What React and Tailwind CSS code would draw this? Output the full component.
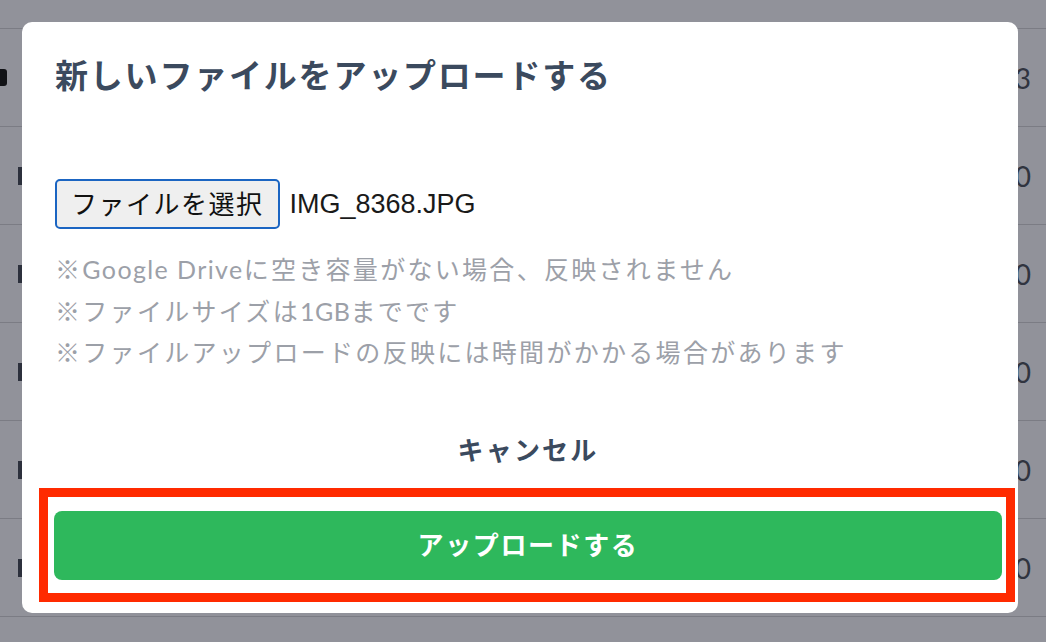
import React from 'react'

const rows = ['3', '0', '0', '0', '0', '0']

const jp = { fontFamily: '"Lato", "Noto Sans CJK JP", sans-serif' }

function BackgroundTable() {
  return (
    <div className="pt-[28px]">
      <div className="border-t border-[#7b7c84]">
        {rows.map((v, i) => (
          <div
            key={i}
            className="h-[98px] border-b border-[#7b7c84] flex items-center justify-between pr-[15px]"
          >
            {i === 0 ? (
              <div className="w-[18px] h-[17px] -ml-[11px] rounded-[3px] bg-[#111216]" />
            ) : (
              <div className="w-[4px] h-[18px] ml-[18px] bg-[#2c303c]" />
            )}
            <span className="text-[28px] text-[#30343f]" style={{ fontFamily: '"Lato", sans-serif' }}>
              {v}
            </span>
          </div>
        ))}
      </div>
    </div>
  )
}

export default function App() {
  return (
    <div className="relative w-[1046px] h-[642px] overflow-hidden bg-[#91929a]">
      <BackgroundTable />

      {/* modal */}
      <div
        className="absolute left-[22px] top-[22px] w-[996px] h-[591px] bg-white rounded-[10px] flex flex-col pt-[31px] pb-[33px]"
        style={jp}
      >
        <h2 className="px-[33px] h-[44px] leading-[44px] text-[33px] font-semibold tracking-[1.8px] text-[#3b4a5e]">
          新しいファイルをアップロードする
        </h2>

        <div className="px-[33px] mt-[82px] flex items-center gap-[10px]">
          <button className="h-[50px] px-[14px] rounded-[5px] border-[2.5px] border-[#1b65c2] bg-[#efefef] text-[26px] tracking-[1.5px] text-[#111] leading-none">
            ファイルを選択
          </button>
          <span
            className="text-[27px] text-[#1a1a1a]"
            style={{ fontFamily: '"Liberation Sans", Arial, sans-serif' }}
          >
            IMG_8368.JPG
          </span>
        </div>

        <div className="px-[33px] mt-[20px] text-[25px] leading-[41.5px] tracking-[2.3px] text-[#9ca0a8]">
          <p>※<span className="tracking-[1.4px]">Google Drive</span>に空き容量がない場合、反映されません</p>
          <p>※ファイルサイズは<span className="tracking-[0.5px]">1GB</span>までです</p>
          <p>※ファイルアップロードの反映には時間がかかる場合があります</p>
        </div>

        <div className="mt-[56px] ml-[32px] mr-[16px] h-[40px] leading-[40px] text-center text-[26px] font-bold tracking-[2.2px] text-[#3b4a5e]">
          キャンセル
        </div>

        <div className="mt-auto ml-[32px] mr-[16px]">
          <button className="w-full h-[69px] rounded-[8px] bg-[#2eb85c] text-white text-[26px] font-bold tracking-[1.6px]">
            アップロードする
          </button>
        </div>

        {/* annotation frame */}
        <div className="absolute left-[17px] top-[466px] w-[976px] h-[114px] border-[9px] border-[#ff2a00] pointer-events-none" />
      </div>
    </div>
  )
}
